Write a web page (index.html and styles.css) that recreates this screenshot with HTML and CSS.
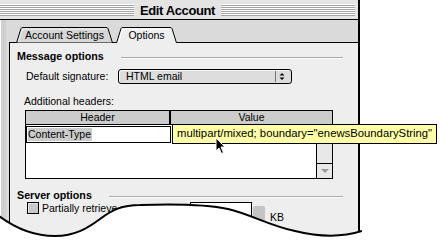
FILE: index.html
```html
<!DOCTYPE html>
<html lang="en">
<head>
    <meta charset="UTF-8">
    <meta name="viewport" content="width=device-width, initial-scale=1.0">
    <title>Edit Account</title>
    <link rel="stylesheet" href="styles.css">
</head>
<body>
    <div class="window">
        <div class="titlebar">
            <span class="stripes"></span>
            <span class="title">Edit Account</span>
            <span class="stripes"></span>
        </div>

        <div class="frame">
            <div class="tabs">
                <div class="tab tab-wide">
                    <svg class="tab-shape" width="97" height="16" viewBox="0 0 97 16">
                        <path d="M0.5 16 L5 1.5 Q5.5 0.5 7 0.5 L90 0.5 Q91.5 0.5 92 1.5 L96.5 16 Z" fill="#d6d6d6" stroke="#000"/>
                        <path d="M2.5 14.5 L6.5 2 L90 2" fill="none" stroke="#f4f4f4"/>
                    </svg>
                    <span class="tab-label">Account Settings</span>
                </div>
                <div class="tab tab-narrow">
                    <svg class="tab-shape" width="61" height="16" viewBox="0 0 61 16">
                        <path d="M0 16 L5 1 L56 1 L61 16 Z" fill="#eee"/>
                        <path d="M0.5 16 L5 1.5 Q5.5 0.5 7 0.5 L54 0.5 Q55.5 0.5 56 1.5 L60.5 16" fill="none" stroke="#000"/>
                        <path d="M2.5 16 L6.5 2 L54 2" fill="none" stroke="#fff"/>
                    </svg>
                    <span class="tab-label">Options</span>
                </div>
            </div>

            <div class="panel">
                <div class="group-title first">
                    <span>Message options</span>
                    <span class="rule"></span>
                </div>

                <div class="sig-row">
                    <span class="sig-label">Default signature:</span>
                    <div class="popup">
                        <span class="popup-text">HTML email</span>
                        <svg class="popup-arrows" width="13" height="11" viewBox="0 0 13 11">
                            <path d="M0.5 0 V11" stroke="#777"/>
                            <path d="M4.5 4.5 L7 2 L9.5 4.5 Z" fill="#000"/>
                            <path d="M4.5 6.5 L7 9 L9.5 6.5 Z" fill="#000"/>
                        </svg>
                    </div>
                </div>

                <div class="headers-label">Additional headers:</div>

                <div class="list">
                    <div class="list-head">
                        <div class="col-header">Header</div>
                        <div class="col-value">Value</div>
                    </div>
                    <div class="list-body">
                        <div class="list-rows">
                            <div class="edit-cell"><span class="selected">Content-Type</span></div>
                        </div>
                        <div class="scrollbar">
                            <div class="scroll-down">
                                <svg width="8" height="4" viewBox="0 0 8 4"><path d="M0 0 L8 0 L4 4 Z" fill="#9a9a9a"/></svg>
                            </div>
                        </div>
                    </div>
                </div>

                <div class="group-title second">
                    <span>Server options</span>
                    <span class="rule"></span>
                </div>

                <div class="check-row">
                    <span class="checkbox"></span>
                    <span class="check-label">Partially retrieve messages over</span>
                    <span class="num-field"></span>
                    <span class="stepper"></span>
                    <span class="unit">KB</span>
                </div>
            </div>
        </div>
    </div>

    <div class="tooltip">multipart/mixed; boundary="enewsBoundaryString"</div>

    <svg class="cursor" width="12" height="18" viewBox="0 0 12 18">
        <path d="M1 1 L1 14 L4 11 L6.5 16.5 L8.5 15.5 L6 10 L10 10 Z" fill="#000" stroke="#fff" stroke-width="1"/>
    </svg>

    <svg class="torn" width="362" height="46" viewBox="0 0 362 46">
        <path d="M-1 21 C15 33 35 41 55 41 C75 41 88 33 100 24 C112 15 122 10 140 10 C170 9 205 9 228 14 C250 19 270 31 295 36 C315 41 340 43 362 36 L362 46 L-1 46 Z" fill="#fff"/>
        <path d="M-1 21 C15 33 35 41 55 41 C75 41 88 33 100 24 C112 15 122 10 140 10 C170 9 205 9 228 14 C250 19 270 31 295 36 C315 41 340 43 362 36" fill="none" stroke="#000" stroke-width="2"/>
    </svg>
</body>
</html>
```

FILE: styles.css
```css
body {
    margin: 0;
    width: 440px;
    height: 241px;
    overflow: hidden;
    position: relative;
    background-color: #fff;
    font-family: "Liberation Sans", Arial, sans-serif;
    font-size: 10.5px;
    color: #000;
}
.window {
    width: 358px;
    height: 241px;
    overflow: hidden;
    border-right: 2px solid #000;
    background-color: #dadada;
    box-shadow: inset 1px 0 #fff, inset 6px 0 #cfcfcf;
}
.titlebar {
    height: 19px;
    border-bottom: 1px solid #000;
    background-color: #e4e4e4;
    display: flex;
    align-items: center;
}
.stripes {
    flex: 1;
    height: 12px;
    background: repeating-linear-gradient(to bottom, #fff 0 1px, #a4a4a4 1px 2px);
}
.stripes:last-child {
    margin-right: 3px;
}
.title {
    font-weight: bold;
    font-size: 13px;
    letter-spacing: -0.4px;
    line-height: 19px;
    padding: 1px 6px 0;
}
.frame {
    padding-top: 7px;
}
.tabs {
    display: flex;
    gap: 3px;
    height: 16px;
    margin-left: 16px;
    position: relative;
    z-index: 1;
}
.tab {
    position: relative;
    height: 16px;
    display: flex;
    justify-content: center;
}
.tab-wide {
    width: 97px;
}
.tab-narrow {
    width: 61px;
}
.tab-shape {
    position: absolute;
    left: 0;
    top: 0;
}
.tab-label {
    position: relative;
    line-height: 16px;
}
.panel {
    margin: -1px 0 0 9px;
    width: 342px;
    height: 196px;
    border: 1px solid #000;
    background-color: #eee;
    padding: 0 9px 0 7px;
    box-sizing: content-box;
}
.group-title {
    display: flex;
    width: 326px;
    font-weight: bold;
    font-size: 10.7px;
    line-height: 13px;
}
.group-title.first {
    margin-top: 7px;
}
.group-title.second {
    margin-top: 10px;
}
.rule {
    flex: 1;
    margin: 7px 0 0 17px;
    height: 0;
    border-top: 1px solid #aaa;
    border-bottom: 1px solid #fff;
}
.sig-row {
    display: flex;
    align-items: center;
    height: 15px;
    margin: 6px 0 0 9px;
}
.sig-label {
    width: 92px;
    line-height: 15px;
}
.popup {
    width: 174px;
    height: 15px;
    box-sizing: border-box;
    border: 1px solid #000;
    border-radius: 3px;
    background-color: #ddd;
    box-shadow: inset 1px 1px #f6f6f6;
    display: flex;
    align-items: center;
    padding: 0 3px 0 7px;
}
.popup-text {
    flex: 1;
    line-height: 13px;
}
.headers-label {
    margin: 11px 0 0 7px;
    line-height: 13px;
}
.list {
    margin: 2px 0 0 8px;
    width: 308px;
    box-sizing: border-box;
    border: 1px solid #000;
}
.list-head {
    display: flex;
    height: 13px;
    line-height: 13px;
    background-color: #ccc;
    border-bottom: 1px solid #000;
}
.col-header {
    width: 143px;
    border-right: 2px solid #000;
    text-align: center;
}
.col-value {
    flex: 1;
    text-align: center;
}
.list-body {
    display: flex;
    height: 53px;
    background-color: #fff;
}
.list-rows {
    flex: 1;
    padding-top: 1px;
}
.edit-cell {
    width: 145px;
    height: 17px;
    box-sizing: border-box;
    border: 1px solid #000;
    padding: 1px 0 0 1px;
    line-height: 13px;
}
.selected {
    background-color: #ccc;
    display: inline-block;
    padding-right: 1px;
}
.scrollbar {
    width: 15px;
    border-left: 1px solid #000;
    background-color: #e8e8e8;
    display: flex;
    flex-direction: column;
    justify-content: flex-end;
}
.scroll-down {
    height: 15px;
    box-sizing: border-box;
    border-top: 1px solid #000;
    display: flex;
    align-items: center;
    justify-content: center;
}
.check-row {
    display: flex;
    align-items: flex-start;
    margin-left: 10px;
}
.checkbox {
    width: 12px;
    height: 12px;
    box-sizing: border-box;
    border: 1px solid #000;
    background-color: #c8c8c8;
    box-shadow: inset 1px 1px #e8e8e8;
}
.check-label {
    width: 148px;
    margin-left: 3px;
    line-height: 12px;
    white-space: nowrap;
    overflow: hidden;
}
.num-field {
    width: 62px;
    height: 22px;
    box-sizing: border-box;
    border: 1px solid #000;
    background-color: #fff;
}
.stepper {
    width: 12px;
    height: 17px;
    margin: 4px 0 0 1px;
    border-radius: 2px;
    background-color: #c4c4c4;
}
.unit {
    margin: 9px 0 0 5px;
    line-height: 12px;
}
.tooltip {
    position: absolute;
    left: 172px;
    top: 124px;
    height: 20px;
    box-sizing: border-box;
    border: 1px solid #000;
    background-color: #ffffa8;
    padding: 0 4px 2px;
    font-size: 11.3px;
    line-height: 16px;
    white-space: nowrap;
}
.cursor {
    position: absolute;
    left: 215px;
    top: 137px;
}
.torn {
    position: absolute;
    left: 0;
    top: 195px;
}
```
